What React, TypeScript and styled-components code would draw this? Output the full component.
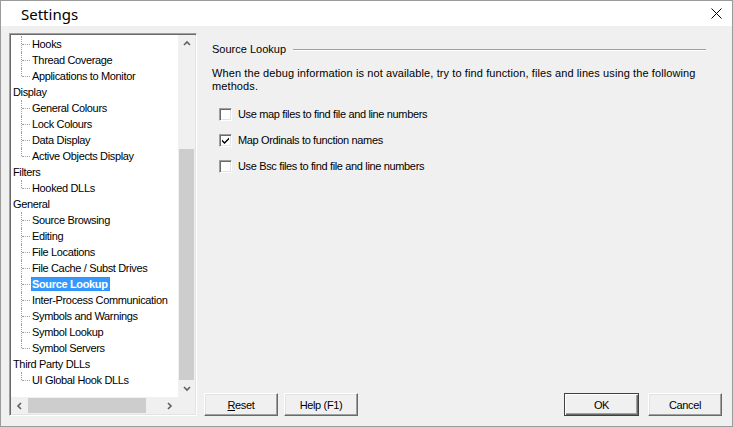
import React from "react";
import styled, { createGlobalStyle } from "styled-components";

const Global = createGlobalStyle`
  html, body { margin: 0; padding: 0; background: #f0f0f0; }
  * { box-sizing: border-box; }
  #root { width: 733px; height: 427px; }
`;

const Window = styled.div`
  width: 733px;
  height: 427px;
  border: 1px solid #9b9b9b;
  display: flex;
  flex-direction: column;
  background: #f0f0f0;
  font-family: "Liberation Sans", Arial, sans-serif;
  font-size: 11px;
  letter-spacing: -0.35px;
  color: #000;
`;

const TitleBar = styled.div`
  height: 25px;
  flex: none;
  background: #fff;
  display: flex;
  align-items: center;
  justify-content: space-between;
  padding: 0 10px 0 20px;
`;

const Title = styled.span`
  font-family: "Noto Sans", "Open Sans", sans-serif;
  font-size: 15px;
  letter-spacing: 0;
  color: #000;
`;

const CloseBtn = styled.div`
  width: 12px;
  height: 12px;
  display: flex;
  align-items: center;
  justify-content: center;
`;

const Body = styled.div`
  flex: 1;
  display: flex;
  padding: 7px 10px 10px 8px;
  min-height: 0;
`;

const TreePanel = styled.div`
  width: 188px;
  flex: none;
  border: 1px solid;
  border-color: #a0a0a0 #fff #fff #a0a0a0;
  box-shadow: inset 1px 1px 0 #696969, inset -1px -1px 0 #e3e3e3;
  padding: 1px;
  display: grid;
  grid-template-columns: 1fr 17px;
  grid-template-rows: 1fr 17px;
  background: #fff;
`;

const TreeContent = styled.div`
  overflow: hidden;
  padding-top: 1px;
  background: #fff;
`;

const Row = styled.div<{ $child?: boolean; $last?: boolean }>`
  position: relative;
  height: 16px;
  line-height: 16px;
  white-space: nowrap;
  padding-left: ${(p) => (p.$child ? "20px" : "1px")};

  ${(p) =>
    p.$child &&
    `
    &::before {
      content: "";
      position: absolute;
      left: 10px;
      top: 0;
      height: ${p.$last ? "8px" : "16px"};
      border-left: 1px dotted #a0a0a0;
    }
    &::after {
      content: "";
      position: absolute;
      left: 11px;
      top: 8px;
      width: 8px;
      border-top: 1px dotted #a0a0a0;
    }
  `}
`;

const Label = styled.span<{ $selected?: boolean }>`
  display: inline-block;
  padding: 0 1px;
  line-height: 14px;
  vertical-align: top;
  margin-top: 1px;
  ${(p) =>
    p.$selected &&
    `
    background: #3399ff;
    color: #fff;
    font-weight: bold;
    outline: 1px dotted #cc6600;
    outline-offset: -1px;
    padding: 0 2px 0 1px;
  `}
`;

const VScroll = styled.div`
  background: #f0f0f0;
  display: flex;
  flex-direction: column;
`;

const HScroll = styled.div`
  background: #f0f0f0;
  display: flex;
`;

const Corner = styled.div`
  background: #f0f0f0;
`;

const Arrow = styled.div`
  width: 17px;
  height: 17px;
  flex: none;
  display: flex;
  align-items: center;
  justify-content: center;
`;

const VTrack = styled.div`
  flex: 1;
  display: flex;
  flex-direction: column;
  justify-content: flex-end;
  padding: 0 1px;
`;

const VThumb = styled.div`
  height: 231px;
  background: #cdcdcd;
`;

const HTrack = styled.div`
  flex: 1;
  display: flex;
  padding: 1px 0;
`;

const HThumb = styled.div`
  width: 118px;
  background: #cdcdcd;
`;

const RightColumn = styled.div`
  flex: 1;
  display: flex;
  flex-direction: column;
  padding-left: 7px;
`;

const Content = styled.div`
  flex: 1;
  padding: 9px 16px 0 8px;
`;

const GroupHeader = styled.div`
  display: flex;
  align-items: center;
  height: 13px;
  gap: 7px;
`;

const GroupTitle = styled.span`
  letter-spacing: 0;
`;

const GroupLine = styled.div`
  flex: 1;
  height: 2px;
  border-top: 1px solid #a0a0a0;
  border-bottom: 1px solid #fff;
  margin-top: 2px;
`;

const Description = styled.p`
  margin: 12px 0 0 0;
  line-height: 13px;
  letter-spacing: 0.1px;
`;

const Options = styled.div`
  display: flex;
  flex-direction: column;
  gap: 10px;
  margin-top: 13px;
  padding-left: 7px;
`;

const OptionRow = styled.label`
  display: flex;
  align-items: center;
  gap: 6px;
  height: 16px;
`;

const Box = styled.span`
  width: 13px;
  height: 13px;
  flex: none;
  background: #fff;
  border: 1px solid;
  border-color: #a0a0a0 #fff #fff #a0a0a0;
  box-shadow: inset 1px 1px 0 #696969, inset -1px -1px 0 #e3e3e3;
  display: flex;
  align-items: center;
  justify-content: center;
`;

const ButtonRow = styled.div`
  display: flex;
  justify-content: space-between;
  height: 23px;
  flex: none;
`;

const ButtonGroup = styled.div<{ $gap: number }>`
  display: flex;
  gap: ${(p) => p.$gap}px;
`;

const Button = styled.button<{ $default?: boolean }>`
  width: ${(p) => (p.$default ? "75px" : "74px")};
  height: 23px;
  margin: 0;
  padding: 0;
  font: inherit;
  letter-spacing: inherit;
  color: #000;
  background: #f0f0f0;
  border: 1px solid;
  border-color: ${(p) =>
    p.$default ? "#404040" : "#fff #696969 #696969 #fff"};
  box-shadow: ${(p) =>
    p.$default
      ? "inset 1px 1px 0 #fff, inset -1px -1px 0 #696969, inset -2px -2px 0 #a0a0a0"
      : "inset -1px -1px 0 #a0a0a0, inset 1px 1px 0 #e3e3e3"};
`;

const Underline = styled.span`
  text-decoration: underline;
`;

const Chevron = ({ dir }: { dir: "up" | "down" | "left" | "right" }) => {
  const pts: Record<string, string> = {
    up: "1,5 4,2 7,5",
    down: "1,2 4,5 7,2",
    left: "5,1 2,4 5,7",
    right: "2,1 5,4 2,7",
  };
  return (
    <svg width="8" height="8" viewBox="0 0 8 8">
      <polyline
        points={pts[dir]}
        fill="none"
        stroke="#606060"
        strokeWidth="1.6"
      />
    </svg>
  );
};

type Item = { label: string; child?: boolean; last?: boolean; selected?: boolean };

const items: Item[] = [
  { label: "Hooks", child: true },
  { label: "Thread Coverage", child: true },
  { label: "Applications to Monitor", child: true, last: true },
  { label: "Display" },
  { label: "General Colours", child: true },
  { label: "Lock Colours", child: true },
  { label: "Data Display", child: true },
  { label: "Active Objects Display", child: true, last: true },
  { label: "Filters" },
  { label: "Hooked DLLs", child: true, last: true },
  { label: "General" },
  { label: "Source Browsing", child: true },
  { label: "Editing", child: true },
  { label: "File Locations", child: true },
  { label: "File Cache / Subst Drives", child: true },
  { label: "Source Lookup", child: true, selected: true },
  { label: "Inter-Process Communication", child: true },
  { label: "Symbols and Warnings", child: true },
  { label: "Symbol Lookup", child: true },
  { label: "Symbol Servers", child: true, last: true },
  { label: "Third Party DLLs" },
  { label: "UI Global Hook DLLs", child: true, last: true },
];

const options = [
  { label: "Use map files to find file and line numbers", checked: false },
  { label: "Map Ordinals to function names", checked: true },
  { label: "Use Bsc files to find file and line numbers", checked: false },
];

export default function App() {
  return (
    <>
      <Global />
      <Window>
        <TitleBar>
          <Title>Settings</Title>
          <CloseBtn>
            <svg width="11" height="11" viewBox="0 0 11 11">
              <path d="M0.5 0.5 L10.5 10.5 M10.5 0.5 L0.5 10.5" stroke="#000" strokeWidth="1" />
            </svg>
          </CloseBtn>
        </TitleBar>
        <Body>
          <TreePanel>
            <TreeContent>
              {items.map((it) => (
                <Row key={it.label} $child={it.child} $last={it.last}>
                  <Label $selected={it.selected}>{it.label}</Label>
                </Row>
              ))}
            </TreeContent>
            <VScroll>
              <Arrow>
                <Chevron dir="up" />
              </Arrow>
              <VTrack>
                <VThumb />
              </VTrack>
              <Arrow>
                <Chevron dir="down" />
              </Arrow>
            </VScroll>
            <HScroll>
              <Arrow>
                <Chevron dir="left" />
              </Arrow>
              <HTrack>
                <HThumb />
              </HTrack>
              <Arrow>
                <Chevron dir="right" />
              </Arrow>
            </HScroll>
            <Corner />
          </TreePanel>
          <RightColumn>
            <Content>
              <GroupHeader>
                <GroupTitle>Source Lookup</GroupTitle>
                <GroupLine />
              </GroupHeader>
              <Description>
                When the debug information is not available, try to find function, files and lines using the following methods.
              </Description>
              <Options>
                {options.map((o) => (
                  <OptionRow key={o.label}>
                    <Box>
                      {o.checked && (
                        <svg width="9" height="9" viewBox="0 0 9 9">
                          <path d="M1 3.5 L3.5 6 L8 1.5 L8 3.5 L3.5 8 L1 5.5 Z" fill="#000" />
                        </svg>
                      )}
                    </Box>
                    <span>{o.label}</span>
                  </OptionRow>
                ))}
              </Options>
            </Content>
            <ButtonRow>
              <ButtonGroup $gap={6}>
                <Button>
                  <Underline>R</Underline>eset
                </Button>
                <Button>Help (F1)</Button>
              </ButtonGroup>
              <ButtonGroup $gap={9}>
                <Button $default>OK</Button>
                <Button>Cancel</Button>
              </ButtonGroup>
            </ButtonRow>
          </RightColumn>
        </Body>
      </Window>
    </>
  );
}
